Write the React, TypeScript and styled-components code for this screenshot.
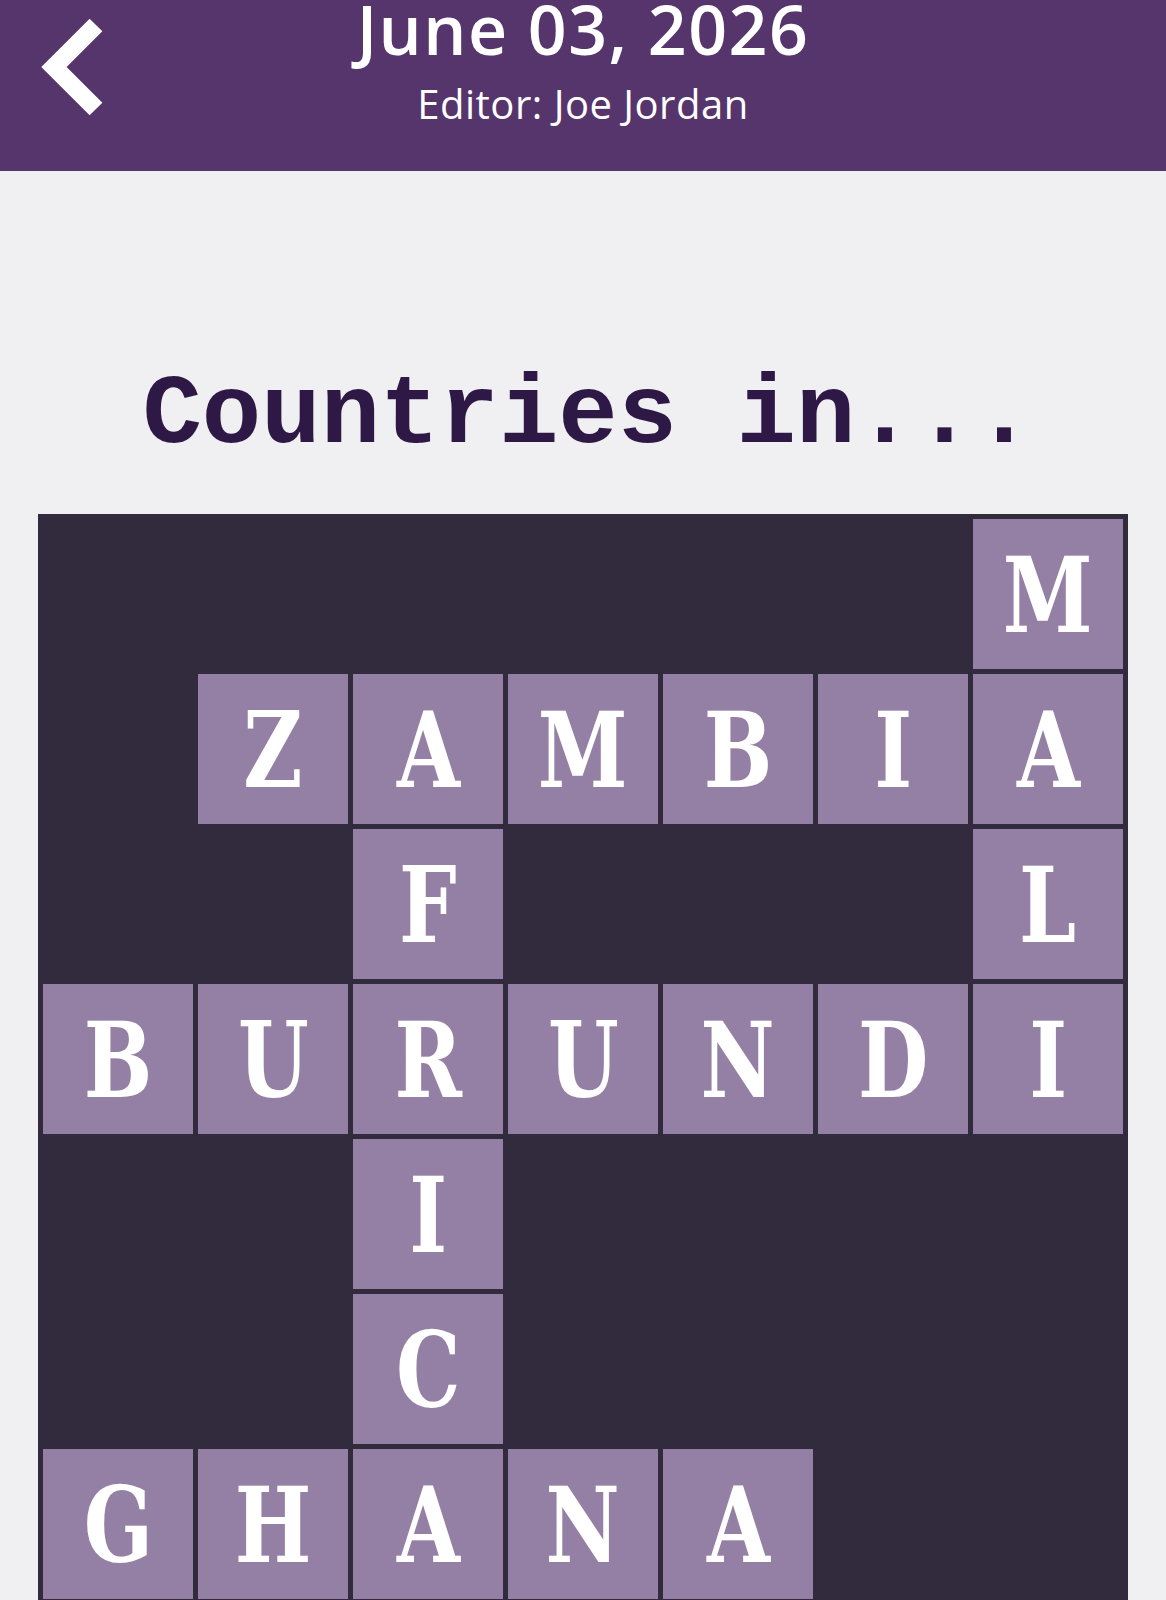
import React from "react";
import styled, { createGlobalStyle } from "styled-components";

const GlobalStyle = createGlobalStyle`
  html, body {
    margin: 0;
    padding: 0;
    background: #f0f0f2;
  }
  body {
    font-family: "Open Sans", "Noto Sans", sans-serif;
  }
`;

const Page = styled.div`
  width: 1166px;
  min-height: 1600px;
  background: #f0f0f2;
  overflow: hidden;
`;

const Header = styled.header`
  height: 171px;
  background: #56346c;
  display: grid;
  grid-template-columns: 1fr auto 1fr;
  align-items: start;
  color: #ffffff;
`;

const BackButton = styled.button`
  justify-self: start;
  width: 120px;
  height: 130px;
  padding: 0;
  border: none;
  background: transparent;
  cursor: pointer;
  display: block;
`;

const HeaderText = styled.div`
  display: flex;
  flex-direction: column;
  align-items: center;
`;

const DateTitle = styled.h1`
  margin: 0;
  font-family: "Open Sans", "Noto Sans", sans-serif;
  font-weight: 600;
  font-size: 68px;
  line-height: 58px;
  letter-spacing: 1.5px;
  white-space: nowrap;
`;

const Editor = styled.div`
  margin-top: 21px;
  font-family: "Open Sans", "Noto Sans", sans-serif;
  font-weight: 400;
  font-size: 40px;
  line-height: 50px;
  letter-spacing: 0.5px;
  white-space: nowrap;
`;

const PuzzleTitle = styled.h2`
  margin: 195px 0 0 0;
  padding-left: 10px;
  text-align: center;
  font-family: "Liberation Mono", "Courier New", monospace;
  font-weight: 700;
  font-size: 99px;
  line-height: 100px;
  color: #2e1845;
  white-space: pre;
`;

const Board = styled.div`
  margin: 48px 0 0 38px;
  width: 1090px;
  box-sizing: border-box;
  padding: 5px;
  background: #322a3d;
  display: grid;
  grid-template-columns: repeat(7, 150px);
  grid-auto-rows: 150px;
  gap: 5px;
`;

const Cell = styled.div<{ $filled: boolean }>`
  background: ${(p) => (p.$filled ? "#9580a5" : "transparent")};
  display: flex;
  align-items: center;
  justify-content: center;
  padding-top: 4px;
  box-sizing: border-box;
`;

const Letter = styled.span`
  display: inline-block;
  color: #ffffff;
  font-family: "DejaVu Serif", "Liberation Serif", serif;
  font-weight: 700;
  font-size: 104px;
  line-height: 1;
  transform: scaleX(0.78);
`;

const rows = [
  "......M",
  ".ZAMBIA",
  "..F...L",
  "BURUNDI",
  "..I....",
  "..C....",
  "GHANA..",
];

export default function App() {
  return (
    <Page>
      <GlobalStyle />
      <Header>
        <BackButton aria-label="Back">
          <svg width="120" height="130" viewBox="0 0 120 130">
            <polyline
              points="96,25 54,67 96,109"
              fill="none"
              stroke="#ffffff"
              strokeWidth="18"
              strokeLinejoin="miter"
              strokeLinecap="butt"
            />
          </svg>
        </BackButton>
        <HeaderText>
          <DateTitle>June 03, 2026</DateTitle>
          <Editor>Editor: Joe Jordan</Editor>
        </HeaderText>
        <div />
      </Header>
      <PuzzleTitle>Countries in...</PuzzleTitle>
      <Board>
        {rows.flatMap((row, r) =>
          row.split("").map((ch, c) => (
            <Cell key={`${r}-${c}`} $filled={ch !== "."}>
              {ch !== "." && <Letter>{ch}</Letter>}
            </Cell>
          ))
        )}
      </Board>
    </Page>
  );
}
